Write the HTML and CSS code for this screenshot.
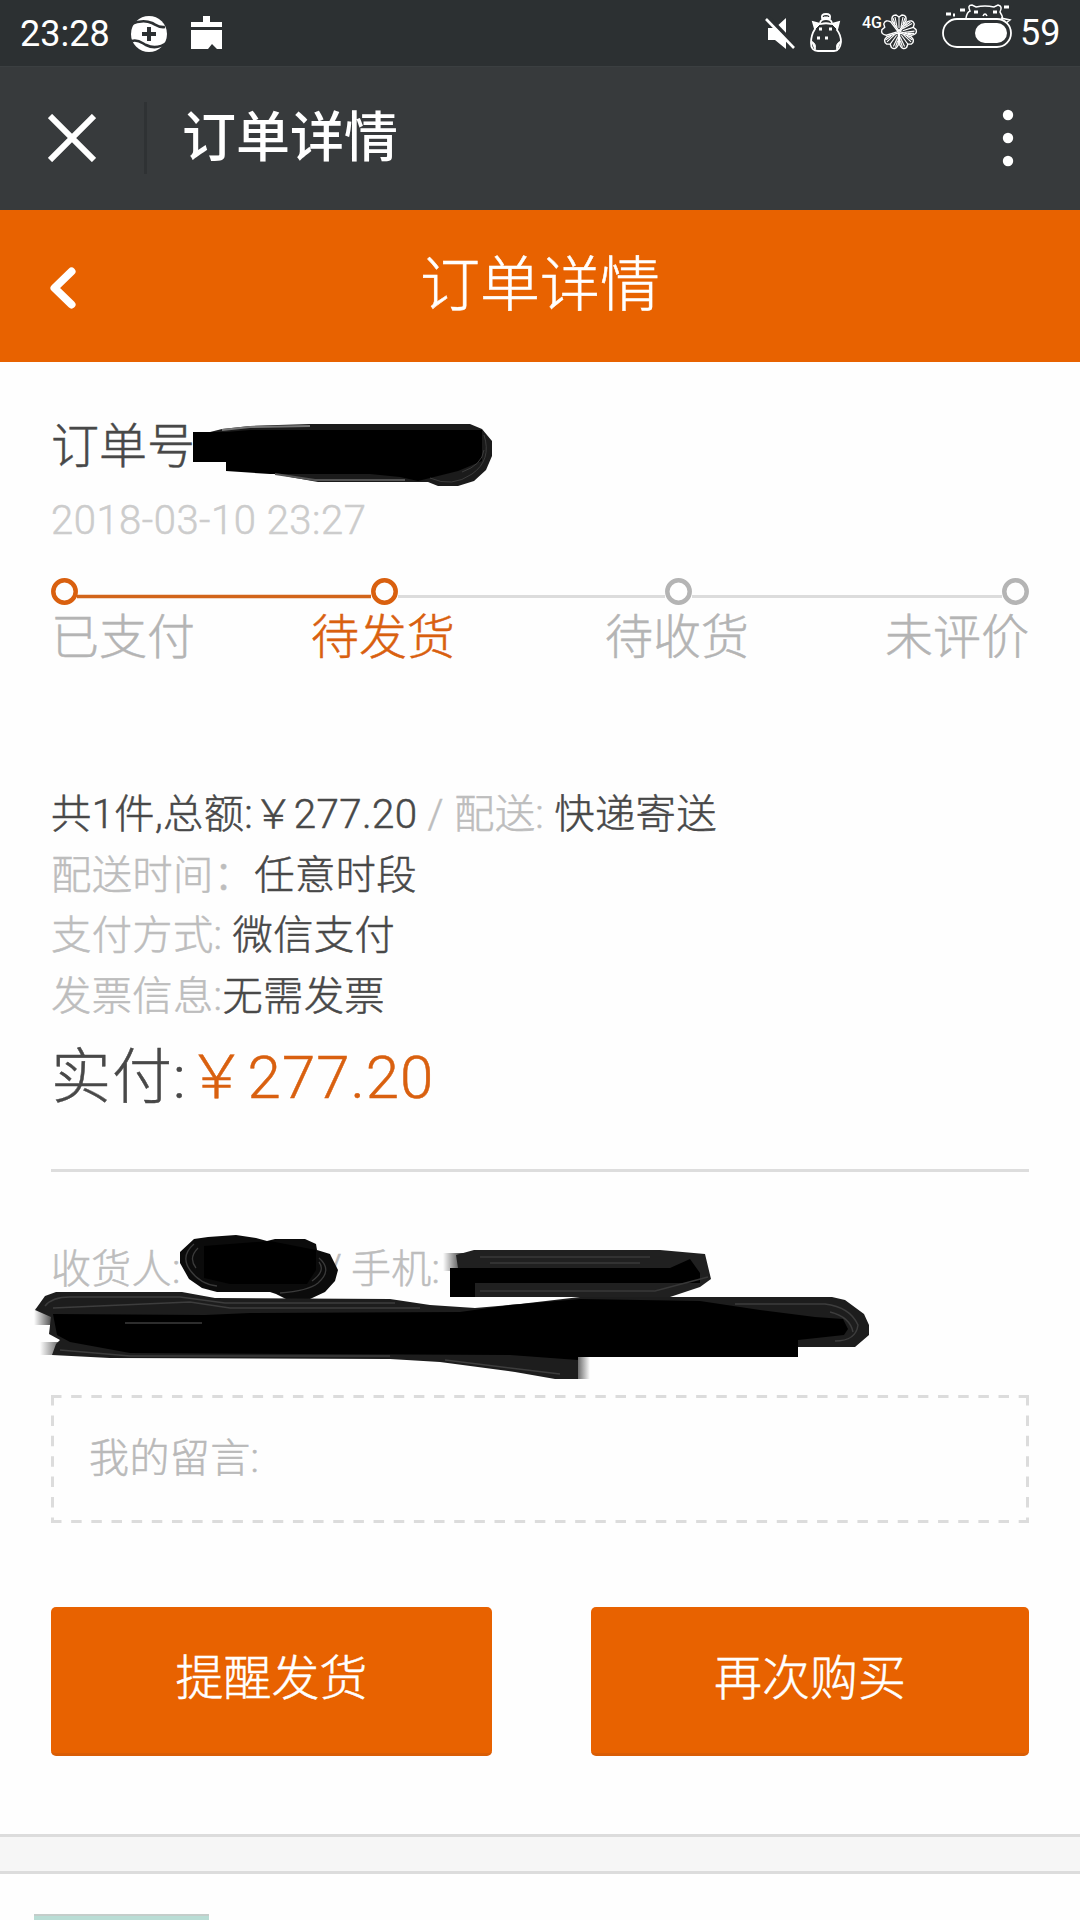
FILE: index.html
```html
<!DOCTYPE html>
<html lang="zh-CN">
<head>
<meta charset="utf-8">
<title>订单详情</title>
<link rel="stylesheet" href="styles.css">
</head>
<body>
<div class="status">
  <span class="clock">23:28</span>
  <svg class="ic-sync" width="38" height="38" viewBox="0 0 38 38">
    <circle cx="19" cy="19" r="18" fill="#fff"/>
    <path d="M0 9.500C8 6 15 5 22 8C26 10 29 13 35 12M38 27C30 33 22 33 16 30C12 28 8 24 2 26" fill="none" stroke="#2c3032" stroke-width="2.600"/>
    <path d="M19 12v14M12 19h14" stroke="#2c3032" stroke-width="4"/>
  </svg>
  <svg class="ic-clean" width="31" height="34" viewBox="0 0 31 34" fill="#fff">
    <path d="M12 0h7v6h12v5H0V6h12zM0 14h31v19h-5l-5-5-4 5H0z"/>
  </svg>
  <svg class="ic-mute" width="32" height="34" viewBox="0 0 32 34">
    <path d="M3 12h7L21 2v31L10 24H3z" fill="#fff"/>
    <path d="M3 1L31 30" stroke="#2c3032" stroke-width="4"/>
    <path d="M1 3L29 32" stroke="#fff" stroke-width="2.600"/>
  </svg>
  <svg class="ic-bear" width="34" height="40" viewBox="0 0 34 40" fill="none" stroke="#fff" stroke-width="1.800">
    <path d="M6 16L4 9l8 2q5-1.500 10 0l8-2-2 8q4 5 4 12-1 9-7 9H9q-7 0-7-8 0-8 4-14z"/>
    <path d="M11 10q1-4 6-4t6 4M13 5q-1-4 4-4t4 4z" />
    <path d="M2 28q6 2 4 10M32 28q-6 2-4 10M5 10l6 1-5 5zM29 10l-6 1 5 5z" fill="#fff" stroke-width="1"/>
    <path d="M15 5h4M10 16h3M20 16h3M8 25h3M16 25h3" stroke-width="3"/>
  </svg>
  <span class="net">4G</span>
  <svg class="ic-clover" width="38" height="36" viewBox="-19 -18 38 36" fill="none" stroke="#fff">
    <g stroke-width="1.400">
      <g id="leaf"><path d="M0-1L-7-11Q-8-17-3-17L0-15 3-17Q8-17 7-11z"/><path d="M0-4v-11M-2-5l-2-10M2-5l2-10M-4-8l-2-6M4-8l2-6" stroke-width="1.100"/></g>
      <use href="#leaf" transform="rotate(72)"/><use href="#leaf" transform="rotate(144)"/><use href="#leaf" transform="rotate(216)"/>
      <path d="M0-1L-7-11Q-8-17-3-17L0-15 3-17Q8-17 7-11z" transform="rotate(288)"/>
    </g>
  </svg>
  <svg class="ic-batt" width="72" height="46" viewBox="0 0 72 46" fill="none" stroke="#fff" stroke-width="1.800">
    <rect x="2" y="17" width="68" height="28" rx="14"/>
    <rect x="34" y="21" width="32" height="20" rx="10" fill="#fff" stroke="none"/>
    <path d="M25 16q1-6 4-7-3-6 2-6l4 2q9-2 18 0l4-2q5 1 2 7 2 3 3 7M42 14q2-4 4 0M60 16l9 2-4 3" stroke-width="1.500"/>
    <path d="M33 10h4M52 10h4M5 12h5M12 13h2M19 8h5M63 5h5" stroke-width="3"/>
  </svg>
  <span class="batt">59</span>
</div>

<header class="appbar">
  <svg width="48" height="48" viewBox="0 0 48 48"><path d="M2 2L46 46M46 2L2 46" stroke="#fff" stroke-width="6"/></svg>
  <i class="sep"></i>
  <h1>订单详情</h1>
  <svg class="more" width="12" height="60" viewBox="0 0 12 60" fill="#fff"><circle cx="6" cy="7" r="5.200"/><circle cx="6" cy="30" r="5.200"/><circle cx="6" cy="53" r="5.200"/></svg>
</header>

<nav class="titlebar">
  <svg width="28" height="44" viewBox="0 0 28 44"><path d="M23.500 5.500L6.500 22L23.500 38.500" fill="none" stroke="#fff" stroke-width="8" stroke-linecap="round" stroke-linejoin="round"/></svg>
  <h2>订单详情</h2>
</nav>

<main>
  <div class="order-no">订单号</div>
  <div class="date">2018-03-10 23:27</div>
  <svg class="track" width="978" height="30" viewBox="51 576 978 30" fill="none">
    <path d="M398 596.500H665M692 596.500H1002" stroke="#dcdcdc" stroke-width="3"/>
    <path d="M77 596.500H371" stroke="#d2651b" stroke-width="3.500"/>
    <g stroke-width="4.500">
      <circle cx="64.500" cy="591.500" r="11.200" stroke="#d9600f"/><circle cx="384.500" cy="591.500" r="11.200" stroke="#d9600f"/>
      <circle cx="678.500" cy="591.500" r="11.200" stroke="#b4b4b4"/><circle cx="1015.500" cy="591.500" r="11.200" stroke="#b4b4b4"/>
    </g>
  </svg>
  <div class="steps"><span>已支付</span><span class="now">待发货</span><span>待收货</span><span>未评价</span></div>

  <section class="info">
    <p><b>共1件,总额:￥277.20</b> / 配送: <b>快递寄送</b></p>
    <p>配送时间：<b>任意时段</b></p>
    <p>支付方式: <b>微信支付</b></p>
    <p>发票信息:<b>无需发票</b></p>
  </section>
  <p class="paid">实付:<span>￥277.20</span></p>
  <hr>
  <p class="receiver"><span class="name">收货人:</span><span class="slash">/</span><span>手机:</span></p>

  <div class="note">
    <svg class="note-edge" width="978" height="130" viewBox="0 0 978 130" fill="none" stroke="#dcdcdc" stroke-width="3">
      <path d="M0 2.500H978M0 127.500H978" stroke-dasharray="10.500 9.660"/>
      <path d="M1.500 1V129M976.500 1V129" stroke-dasharray="10.500 9.900"/>
    </svg>
    我的留言:
  </div>

  <div class="actions"><button>提醒发货</button><button>再次购买</button></div>
</main>
<div class="band"></div>
<div class="goods"><div class="thumb"></div></div>

<svg class="marks" width="1080" height="1920" viewBox="0 0 1080 1920">
  <defs>
    <linearGradient id="fadeL"><stop offset="0" stop-color="#222" stop-opacity="0"/><stop offset="1" stop-color="#222"/></linearGradient>
    <linearGradient id="fadeR"><stop offset="0" stop-color="#222"/><stop offset="1" stop-color="#222" stop-opacity="0"/></linearGradient>
  </defs>
  <g>
    <path d="M210 432L222 429 250 426 310 424H470L482 429 492 441V456L486 470 474 481 458 486H438L428 482H318L290 477 262 471H226V462H193V432H212z" fill="#1b1b1b"/>
    <path d="M193 432H226L250 430H482V461L458 471 418 481 400 477 370 474H270L226 471V462H193z"/>
    <path d="M484 435Q492 460 472 474T430 478M484 450Q482 465 462 472" fill="none" stroke="#3c3c3c"/>
    <path d="M275 474L315 480H405" fill="none" stroke="#555" stroke-width="2"/>
    <path d="M222 430L250 427 310 426" fill="none" stroke="#777" stroke-width="2"/>
  </g>
  <g>
    <path d="M194 1239L208 1237 236 1235 256 1238 267 1241 275 1239H305L316 1244 317 1250 330 1254 338 1270 335 1281 325 1292 310 1299 290 1301 276 1294 270 1292H217L202 1288 189 1279 180 1263V1252z" fill="#0b0b0b"/>
    <path d="M194 1244Q180 1256 190 1270T217 1286M198 1248Q188 1258 196 1268M319 1258Q333 1270 318 1283 308 1291 280 1293M319 1262Q326 1271 312 1281" fill="none" stroke="#3a3a3a" stroke-width="1.300"/>
    <path d="M204 1246L270 1241 316 1250V1270L307 1284H230L204 1278z"/>
  </g>
  <g>
    <rect x="443" y="1253" width="22" height="18" fill="url(#fadeL)"/>
    <path d="M456 1255L474 1250H660L705 1254 711 1279 700 1287 670 1297H450V1268H458z" fill="#202020"/>
    <path d="M450 1268H670L690 1259 700 1273V1283H450zM450 1268H475V1297H450z" fill="#000"/>
    <path d="M480 1291H655L708 1277M480 1257H650M490 1263H640" fill="none" stroke="#383838" stroke-width="1.500"/>
  </g>
  <g>
    <rect x="34" y="1308" width="22" height="17" fill="url(#fadeL)"/>
    <rect x="40" y="1342" width="28" height="13" fill="url(#fadeL)"/>
    <rect x="572" y="1356" width="18" height="23" fill="url(#fadeR)"/>
    <path d="M35 1310L45 1296 56 1292H182L215 1298 390 1299 430 1305 475 1308 520 1304 580 1297H832L845 1300 864 1314 869 1325V1335L855 1347H798V1357H578V1379H555L515 1372 440 1362 390 1359 110 1358 52 1355 56 1344 60 1340 49 1334 51 1317z" fill="#1d1d1d"/>
    <path d="M53 1314L205 1315 250 1313 460 1312 510 1305 580 1299 700 1301 760 1310 815 1317 843 1319 848 1329 844 1335 798 1340V1357H578V1360L510 1355 130 1353 70 1342 57 1335z" fill="#000"/>
    <path d="M45 1306Q52 1297 70 1297H180L225 1303H395M53 1308L190 1302 230 1308H420M125 1323H202M60 1350L130 1356H390M445 1360L560 1374M735 1304H825Q850 1307 858 1325 856 1341 835 1341M830 1312Q850 1317 853 1332" fill="none" stroke="#3d3d3d" stroke-width="1.500"/>
  </g>
</svg>
</body>
</html>
```
FILE: styles.css
```css
* { box-sizing: border-box; margin: 0; padding: 0; }
body {
  width: 1080px; height: 1920px; overflow: hidden; position: relative;
  background: #fefefe; color: #484848;
  font-family: Roboto, "Noto Sans CJK SC", sans-serif; font-weight: 300;
}
svg { display: block; flex: none; }
.status { height: 66px; background: #2c3032; color: #fff; display: flex; align-items: flex-start; padding-left: 20px; font-weight: 400; }
.clock { width: 110px; font-size: 36px; line-height: 68px; }
.ic-sync { margin-top: 15px; }
.ic-clean { margin: 16px 0 0 23px; }
.ic-mute { margin: 16px 0 0 543px; }
.ic-bear { margin: 13px 0 0 12px; }
.net { width: 20px; margin: 13px 0 0 19px; font-size: 16px; line-height: 20px; font-weight: 500; }
.ic-clover { margin: 14px 0 0 -2px; }
.ic-batt { margin: 2px 0 0 23px; }
.batt { margin-left: 7px; font-size: 36px; line-height: 67px; }

.appbar { height: 144px; background: #373a3c; display: flex; align-items: center; padding: 0 66px 2px 48px; border-top: 1px solid #3b3f41; }
.sep { width: 3px; height: 72px; margin: 0 35px 0 48px; background: #2f3234; }
.appbar h1 { font-size: 54px; line-height: 60px; font-weight: 500; color: #fff; padding-top: 3px; }
.more { margin-left: auto; }

.titlebar { height: 152px; background: #e86200; display: grid; grid-template-columns: 80px 1fr 80px; align-items: center; padding: 0 0 4px; }
.titlebar svg { margin: 8px 0 0 48px; }
.titlebar h2 { text-align: center; color: #fff; font-size: 60px; line-height: 70px; font-weight: 300; padding-top: 3px; }

h2, main { -webkit-text-stroke: .5px currentColor; }
main { height: 1472px; padding: 55px 51px 0; }
.order-no { font-size: 48px; line-height: 60px; }
.date { margin-top: 14px; font-size: 40px; line-height: 60px; letter-spacing: .5px; color: #ccc; }
.track { margin-top: 25px; }
.steps { display: grid; grid-template-columns: 260px 294px 280px 144px; margin-top: 2px; font-size: 48px; line-height: 60px; color: #b4b4b4; }
.steps .now { color: #d9600f; }
.info { margin-top: 117px; font-size: 40.300px; line-height: 60.700px; letter-spacing: .35px; color: #bdbdbd; }
.info b { font-weight: 300; color: #484848; }
.paid { margin-top: 14px; font-size: 60px; line-height: 72px; letter-spacing: 1px; }
.paid span { color: #d9600f; }
hr { margin-top: 55px; border: 0; height: 3px; background: #ddd; }
.receiver { display: flex; margin-top: 68px; font-size: 40px; line-height: 60px; letter-spacing: .3px; color: #bdbdbd; }
.name { width: 275px; }
.slash { width: 25px; }
.note { position: relative; height: 130px; margin-top: 94px; padding-left: 38px; font-size: 40px; line-height: 130px; letter-spacing: .4px; color: #b9b9b9; }
.note-edge { position: absolute; left: 0; top: 0; }
.actions { display: grid; grid-template-columns: 441px 438px; justify-content: space-between; margin-top: 83px; }
button { height: 149px; border: 0; border-bottom: 3px solid #d95d05; border-radius: 5px; background: #e86200; color: #fff; font: inherit; font-size: 48px; padding-bottom: 11px; -webkit-text-stroke: .5px #fff; }
.band { height: 40px; background: #f6f6f6; border: solid #dcdcdc; border-width: 3px 0; }
.goods { padding: 40px 34px 0; }
.thumb { width: 175px; height: 6px; background: #b9ddd5; border-top: 2px solid #c4cdca; }
.marks { position: absolute; left: 0; top: 0; }
```
